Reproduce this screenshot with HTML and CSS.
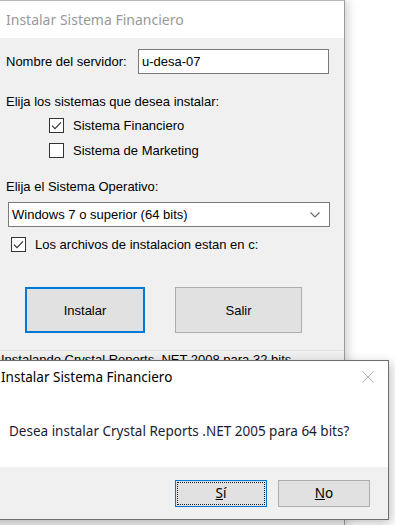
FILE: index.html
```html
<!DOCTYPE html>
<html lang="es">
<head>
<meta charset="utf-8">
<title>Instalar Sistema Financiero</title>
<link rel="stylesheet" href="styles.css">
</head>
<body>
<div class="win">
  <div class="win-title">Instalar Sistema Financiero</div>
  <div class="win-body">
    <div class="row-server">
      <span class="lbl">Nombre del servidor:</span>
      <div class="textbox">u-desa-07</div>
    </div>
    <div class="lbl lbl-sys">Elija los sistemas que desea instalar:</div>
    <div class="chk chk-1">
      <span class="box"><svg viewBox="0 0 15 15" width="15" height="15"><path d="M3 7.6 L6 10.6 L12 4.4" fill="none" stroke="#333" stroke-width="1.2"/></svg></span>
      <span>Sistema Financiero</span>
    </div>
    <div class="chk chk-2">
      <span class="box"></span>
      <span>Sistema de Marketing</span>
    </div>
    <div class="lbl lbl-os">Elija el Sistema Operativo:</div>
    <div class="select">
      <span>Windows 7 o superior (64 bits)</span>
      <svg class="chev" viewBox="0 0 10 6" width="10" height="6"><path d="M0.5 0.5 L5 5 L9.5 0.5" fill="none" stroke="#666" stroke-width="1.1"/></svg>
    </div>
    <div class="chk chk-3">
      <span class="box"><svg viewBox="0 0 15 15" width="15" height="15"><path d="M3 7.6 L6 10.6 L12 4.4" fill="none" stroke="#333" stroke-width="1.2"/></svg></span>
      <span>Los archivos de instalacion estan en c:</span>
    </div>
    <div class="buttons">
      <div class="btn btn-default">Instalar</div>
      <div class="btn btn-exit">Salir</div>
    </div>
    <div class="sep"></div>
    <div class="status">Instalando Crystal Reports .NET 2008 para 32 bits</div>
  </div>
</div>

<div class="dlg">
  <div class="dlg-title">
    <span>Instalar Sistema Financiero</span>
    <svg class="close" viewBox="0 0 12 12" width="12" height="12"><path d="M0.5 0.5 L11.5 11.5 M11.5 0.5 L0.5 11.5" fill="none" stroke="#b0b0b0" stroke-width="1"/></svg>
  </div>
  <div class="dlg-msg">Desea instalar Crystal Reports .NET 2005 para 64 bits?</div>
  <div class="dlg-foot">
    <div class="dbtn dbtn-yes"><span class="focus"><u>S</u>í</span></div>
    <div class="dbtn dbtn-no"><span><u>N</u>o</span></div>
  </div>
</div>
</body>
</html>
```

FILE: styles.css
```css
html, body {
  margin: 0;
  padding: 0;
  background: #ffffff;
  overflow: hidden;
  height: 525px;
}

body {
  position: relative;
  font-family: "Liberation Sans", Arial, sans-serif;
  font-size: 13px;
  color: #000;
}

.win {
  width: 345px;
  height: 525px;
  overflow: hidden;
  border-top: 1px solid #b9b9b9;
  border-right: 1px solid #9a9a9a;
  box-shadow: 2px 0 10px rgba(0, 0, 0, 0.22);
  background: #f0f0f0;
  box-sizing: border-box;
}

.win-title {
  height: 37px;
  background: #fff;
  color: #999;
  font-family: "Noto Sans", "Open Sans", sans-serif;
  font-size: 14px;
  line-height: 37px;
  padding-left: 6px;
}

.win-body {
  display: flex;
  flex-direction: column;
  padding-left: 6px;
}

.lbl {
  line-height: 16px;
  height: 16px;
}

.row-server {
  display: flex;
  align-items: center;
  margin-top: 11px;
  height: 25px;
}

.textbox {
  width: 186px;
  height: 23px;
  line-height: 23px;
  border: 1px solid #7a7a7a;
  background: #fff;
  padding-left: 3px;
  margin-left: auto;
  margin-right: 15px;
}

.lbl-sys {
  margin-top: 20px;
}

.chk {
  display: flex;
  align-items: center;
  height: 15px;
  line-height: 15px;
}

.box {
  width: 13px;
  height: 13px;
  border: 1px solid #333;
  background: #fff;
  margin-right: 9px;
  flex: none;
  position: relative;
}

.box svg {
  position: absolute;
  left: -1px;
  top: -1px;
}

.chk-1 {
  margin-top: 8px;
  margin-left: 43px;
}

.chk-2 {
  margin-top: 10px;
  margin-left: 43px;
}

.lbl-os {
  margin-top: 21px;
}

.select {
  margin-top: 7px;
  margin-left: 2px;
  width: 308px;
  height: 23px;
  border: 1px solid #7a7a7a;
  background: #fff;
  display: flex;
  align-items: center;
  justify-content: space-between;
  padding-left: 3px;
  padding-right: 9px;
}

.chev {
  flex: none;
}

.chk-3 {
  margin-top: 10px;
  margin-left: 5px;
}

.buttons {
  display: flex;
  margin-top: 35px;
  margin-left: 19px;
  gap: 30px;
}

.btn {
  height: 46px;
  background: #e1e1e1;
  display: flex;
  align-items: center;
  justify-content: center;
  box-sizing: border-box;
}

.btn-default {
  width: 120px;
  border: 2px solid #0078d7;
}

.btn-exit {
  width: 127px;
  border: 1px solid #adadad;
}

.sep {
  margin-top: 17px;
  margin-left: -6px;
  height: 1px;
  width: 343px;
  background: #e2e2e2;
}

.status {
  margin-left: -5px;
  line-height: 16px;
  margin-top: 1px;
  white-space: nowrap;
}

.dlg {
  position: absolute;
  left: -20px;
  top: 360px;
  width: 409px;
  height: 160px;
  box-sizing: border-box;
  border: 1px solid #6e6e6e;
  background: #fff;
  box-shadow: 2px 3px 10px rgba(0, 0, 0, 0.25);
  font-family: "Noto Sans", "Open Sans", sans-serif;
  font-size: 13.5px;
  display: flex;
  flex-direction: column;
}

.dlg-title {
  height: 32px;
  display: flex;
  align-items: center;
  justify-content: space-between;
  padding-left: 20px;
  padding-right: 14px;
  color: #000;
}

.close {
  flex: none;
}

.dlg-msg {
  padding-left: 28px;
  margin-top: 28px;
  line-height: 20px;
  color: #1b1b33;
  white-space: nowrap;
}

.dlg-foot {
  margin-top: auto;
  height: 52px;
  background: #f0f0f0;
  display: flex;
  align-items: center;
  justify-content: flex-end;
  padding-right: 18px;
  gap: 11px;
  font-size: 13.5px;
}

.dbtn {
  width: 92px;
  height: 27px;
  box-sizing: border-box;
  background: #e1e1e1;
  display: flex;
  align-items: center;
  justify-content: center;
}

.dbtn-yes {
  border: 1px solid #0078d7;
  padding: 1px;
}

.dbtn-yes .focus {
  flex: 1;
  align-self: stretch;
  border: 1px dotted #222;
  display: flex;
  align-items: center;
  justify-content: center;
}

.dbtn-no {
  border: 1px solid #adadad;
}
```
